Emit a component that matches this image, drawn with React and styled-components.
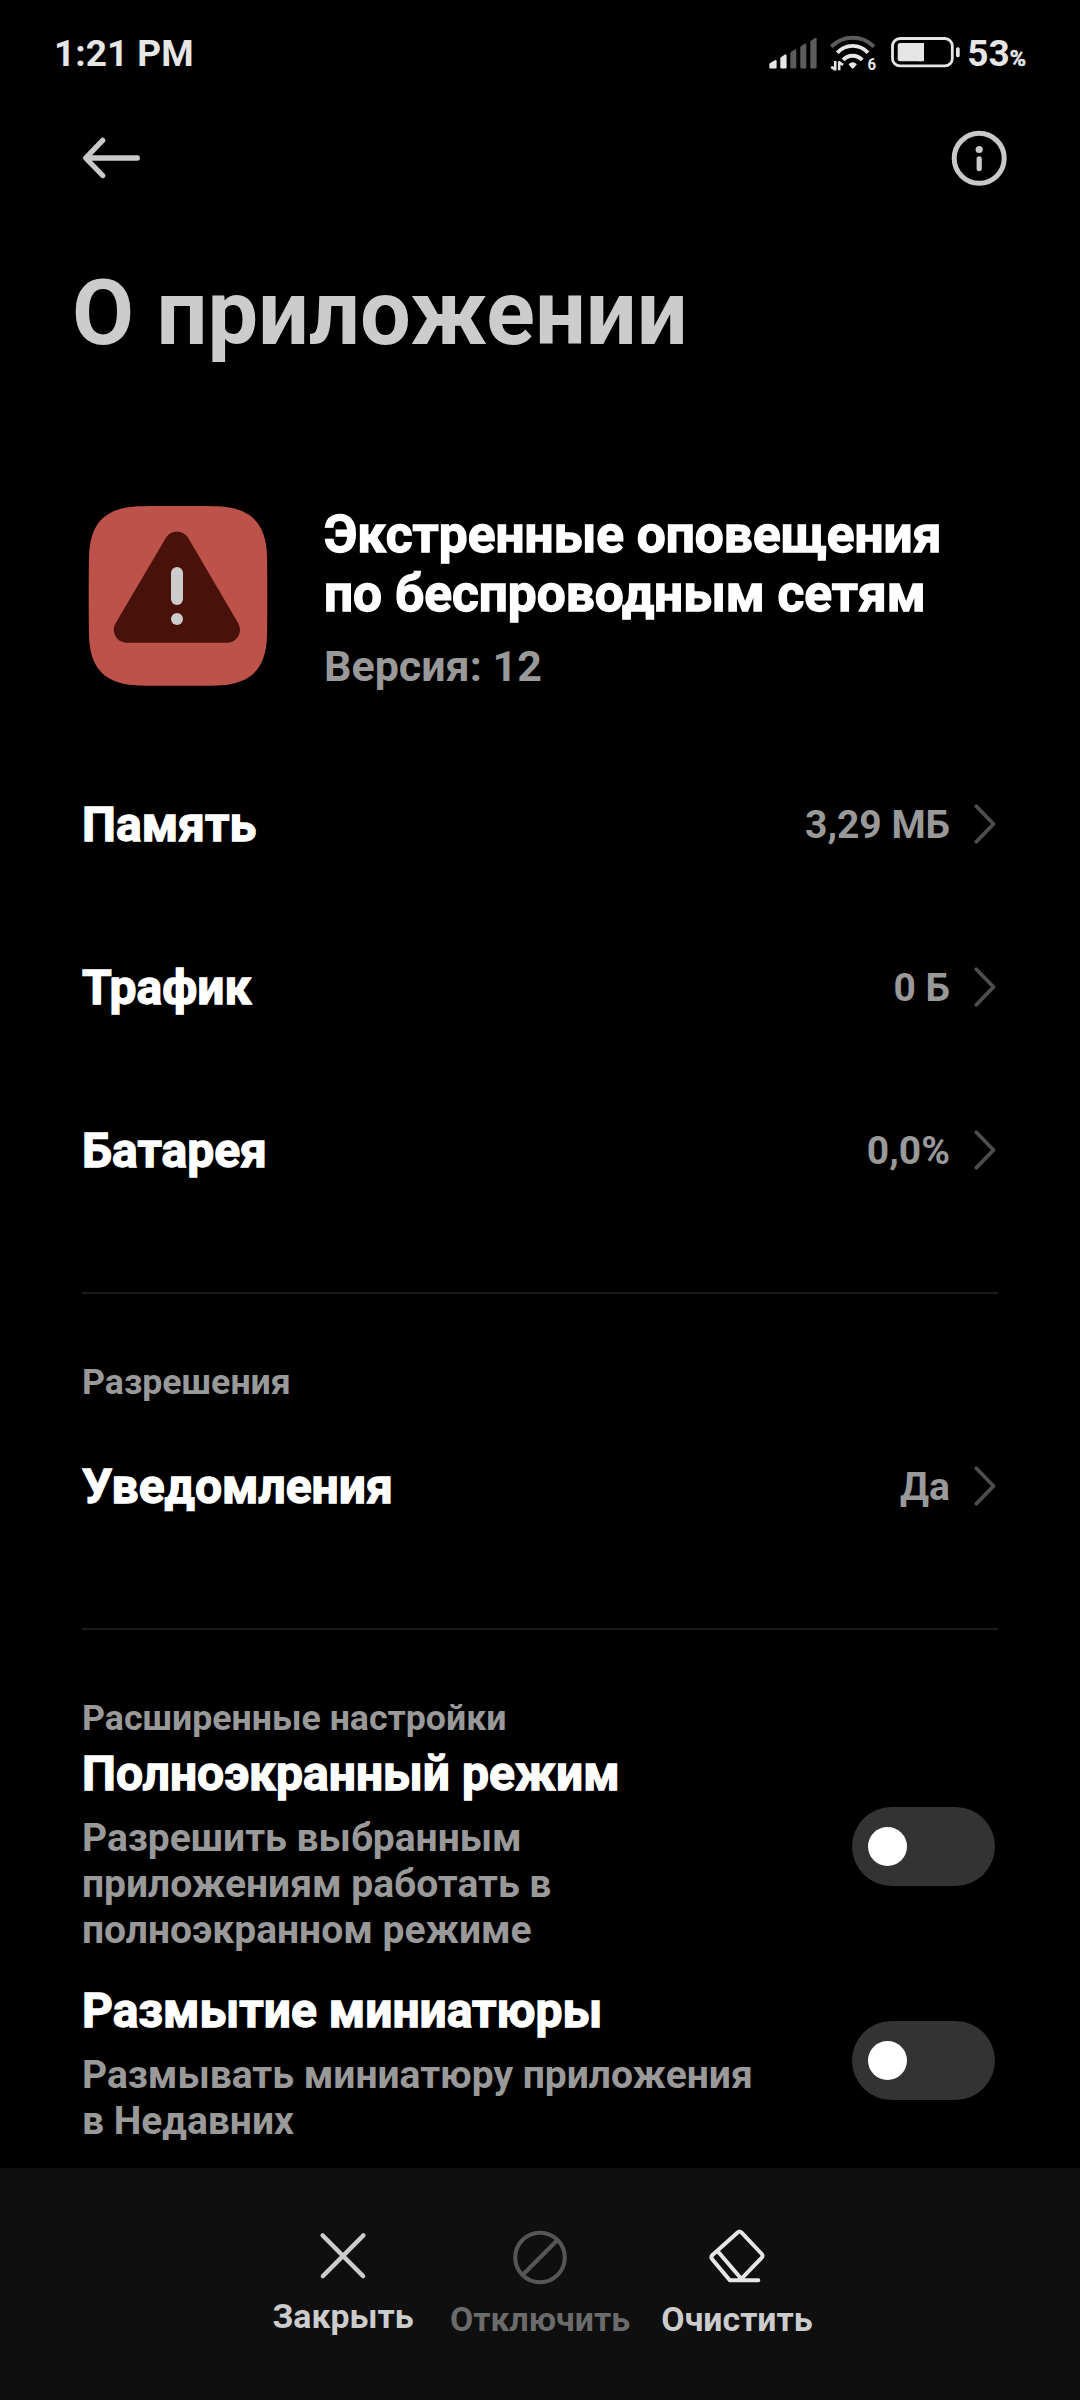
import React, { useState } from 'react';
import styled, { createGlobalStyle } from 'styled-components';

const GlobalStyle = createGlobalStyle`
  * {
    box-sizing: border-box;
  }

  body {
    margin: 0;
    background: #000;
    font-family: Roboto, 'Noto Sans', sans-serif;
    font-weight: 700;
  }
`;

const Screen = styled.div`
  display: flex;
  flex-direction: column;
  width: 1080px;
  height: 2400px;
  overflow: hidden;
  background: #000;
`;

const StatusBar = styled.div`
  display: flex;
  align-items: center;
  flex: none;
  height: 106px;
  padding: 1px 54px 0;
  font-size: 37px;
  line-height: 44px;
  color: #e6e6e6;
`;

const StatusIcons = styled.div`
  display: flex;
  align-items: center;
  margin-left: auto;

  svg {
    display: block;
    margin-bottom: 2px;
    overflow: visible;
  }
`;

const SignalIcon = styled.svg`
  margin-right: 12px;
`;

const WifiIcon = styled.svg`
  margin-right: 14px;

  text {
    font-size: 17px;
  }
`;

const BatteryIcon = styled.svg`
  margin-right: 7px;
`;

const BatteryLevel = styled.div`
  display: flex;
  align-items: baseline;
`;

const Percent = styled.span`
  font-size: 22px;
  line-height: 22px;
  -webkit-text-stroke: 0.5px #e6e6e6;
`;

const AppBar = styled.header`
  display: flex;
  align-items: center;
  justify-content: space-between;
  flex: none;
  height: 104px;
  padding: 0 72px 0 81px;
`;

const IconButton = styled.button`
  display: block;
  padding: 0;
  border: 0;
  background: none;
  color: #c9c9c9;

  svg {
    display: block;
  }
`;

const PageTitle = styled.h1`
  flex: none;
  margin: 51px 72px 0;
  font-size: 90px;
  line-height: 106px;
  color: #ccc;
`;

const Content = styled.main`
  flex: 1;
  min-height: 0;
  overflow: hidden;
`;

const AppInfo = styled.section`
  display: flex;
  align-items: flex-start;
  height: 238px;
  margin-top: 139px;
  padding-left: 88px;
`;

const AppIcon = styled.svg`
  display: block;
  flex: none;
  margin-right: 56px;
`;

const AppName = styled.h2`
  margin: -1px 0 18px;
  font-size: 51.4px;
  line-height: 59px;
  color: #fff;
  -webkit-text-stroke: 1.3px #fff;
`;

const Version = styled.div`
  font-size: 43px;
  line-height: 50px;
  color: #999;
`;

const Row = styled.div`
  display: flex;
  align-items: center;
  height: 163px;
  padding: 0 84px 1px 82px;
`;

const ItemTitle = styled.div`
  font-size: 48px;
  line-height: 56px;
  color: #fff;
  -webkit-text-stroke: 1.3px #fff;
`;

const Value = styled.div`
  margin: 0 24px 0 auto;
  font-size: 39px;
  line-height: 46px;
  color: #999;
`;

const Chevron = styled.svg`
  display: block;
  margin-bottom: 3px;
`;

const Divider = styled.hr`
  height: 2px;
  margin: 59px 82px 67px;
  border: 0;
  background: #1a1a1a;
`;

const SectionLabel = styled.div`
  margin: 0 82px ${(props) => props.$gap}px;
  font-size: 35.7px;
  line-height: 42px;
  color: #999;
`;

const ToggleRow = styled.div`
  display: flex;
  align-items: center;
  justify-content: space-between;
  margin-bottom: 30px;
  padding: 0 85px 0 82px;
`;

const Description = styled.div`
  max-width: 690px;
  margin-top: 13px;
  font-size: 39px;
  line-height: 46px;
  color: #999;
  white-space: pre-line;
`;

const Switch = styled.button`
  display: flex;
  align-items: center;
  justify-content: ${(props) => (props.$on ? 'flex-end' : 'flex-start')};
  flex: none;
  width: 143px;
  height: 79px;
  margin-bottom: 6px;
  padding: 0 16px;
  border: 0;
  border-radius: 40px;
  background: ${(props) => (props.$on ? '#277af7' : '#333')};
`;

const Knob = styled.span`
  width: 39px;
  height: 39px;
  border-radius: 50%;
  background: #fff;
`;

const BottomBar = styled.footer`
  display: flex;
  justify-content: center;
  flex: none;
  height: 232px;
  padding-top: 61px;
  background: #0f0f0f;
`;

const Action = styled.button`
  display: flex;
  flex-direction: column;
  align-items: center;
  width: 197px;
  padding: 0;
  border: 0;
  background: none;
  font: inherit;
  font-size: 33.8px;
  line-height: 40px;
  color: ${(props) => (props.disabled ? '#6b6b6b' : '#ccc')};

  svg {
    display: block;
    margin-bottom: ${(props) => props.$gap}px;
  }
`;

const stats = [
  { title: 'Память', value: '3,29 МБ' },
  { title: 'Трафик', value: '0 Б' },
  { title: 'Батарея', value: '0,0%' },
];

const toggles = [
  {
    title: 'Полноэкранный режим',
    description: 'Разрешить выбранным\nприложениям работать в\nполноэкранном режиме',
  },
  {
    title: 'Размытие миниатюры',
    description: 'Размывать миниатюру приложения\nв Недавних',
  },
];

function LinkRow({ title, value }) {
  return (
    <Row>
      <ItemTitle>{title}</ItemTitle>
      <Value>{value}</Value>
      <Chevron width="22" height="40" viewBox="0 0 22 40" fill="none">
        <path
          d="M2.3 2.3L19.5 20L2.3 37.7"
          stroke="#4d4d4d"
          strokeWidth="3.8"
          strokeLinecap="round"
          strokeLinejoin="round"
        />
      </Chevron>
    </Row>
  );
}

function SwitchRow({ title, description }) {
  const [on, setOn] = useState(false);

  return (
    <ToggleRow>
      <div>
        <ItemTitle>{title}</ItemTitle>
        <Description>{description}</Description>
      </div>
      <Switch $on={on} onClick={() => setOn(!on)}>
        <Knob />
      </Switch>
    </ToggleRow>
  );
}

function App() {
  return (
    <>
      <GlobalStyle />
      <Screen>
        <StatusBar>
          <span>1:21 PM</span>
          <StatusIcons>
            <SignalIcon width="48" height="34" viewBox="0 0 48 34">
              <g fill="#e6e6e6">
                <path d="M.3 28.5Q.3 27.6 1.2 27L5.9 24.3Q7.6 23.6 7.6 25.3V31.5Q7.6 32.5 6.6 32.5H1.3Q.3 32.5 .3 31.5Z" />
                <path d="M11.3 22.4Q11.3 21.4 12.2 20.9L16 18.6Q17.6 17.9 17.6 19.5V31.5Q17.6 32.5 16.6 32.5H12.3Q11.3 32.5 11.3 31.5Z" />
              </g>
              <g fill="#5c5c5c">
                <path d="M21.3 17.2Q21.3 16.2 22.2 15.7L25.7 13.5Q27.3 12.7 27.3 14.4V31.5Q27.3 32.5 26.3 32.5H22.3Q21.3 32.5 21.3 31.5Z" />
                <path d="M31.3 11.5Q31.3 10.5 32.2 10L35.7 7.8Q37.3 7 37.3 8.7V31.5Q37.3 32.5 36.3 32.5H32.3Q31.3 32.5 31.3 31.5Z" />
                <path d="M41.3 6Q41.3 5 42.2 4.4L46 2.1Q47.6 1.3 47.6 3V31.5Q47.6 32.5 46.6 32.5H42.3Q41.3 32.5 41.3 31.5Z" />
              </g>
            </SignalIcon>
            <WifiIcon width="48" height="38" viewBox="0 0 48 38" fill="none">
              <path d="M2.3 12.7A29.8 29.8 0 0 1 45 12.7" stroke="#5c5c5c" strokeWidth="3.9" />
              <g stroke="#e6e6e6" strokeWidth="3.9">
                <path d="M8.3 18.8A20.5 20.5 0 0 1 39 18.8" />
                <path d="M14.1 26A12.8 12.8 0 0 1 33.2 26" />
              </g>
              <path
                d="M19.5 30.2Q23.7 26.2 27.9 30.2L24.6 34.2Q23.7 35 22.8 34.2Z"
                fill="#e6e6e6"
              />
              <path
                d="M6.2 27V35.4L2.2 32.8M10.2 36.3V28.2L14 31"
                stroke="#e6e6e6"
                strokeWidth="2.6"
                strokeLinejoin="round"
              />
              <text x="38.6" y="36.2" textLength="8.6" lengthAdjust="spacingAndGlyphs" fill="#e6e6e6">
                6
              </text>
            </WifiIcon>
            <BatteryIcon width="69" height="32" viewBox="0 0 69 32">
              <rect
                x="1.5"
                y="1.5"
                width="59.8"
                height="27.4"
                rx="7.5"
                fill="none"
                stroke="#e6e6e6"
                strokeWidth="2.8"
              />
              <rect x="6.7" y="6" width="26.3" height="18.2" rx="2.5" fill="#e6e6e6" />
              <path d="M33 6V24.2H28V6Z" fill="#e6e6e6" />
              <rect x="65" y="10.2" width="3.7" height="10" rx="1.6" fill="#e6e6e6" />
            </BatteryIcon>
            <BatteryLevel>
              <span>53</span>
              <Percent>%</Percent>
            </BatteryLevel>
          </StatusIcons>
        </StatusBar>

        <AppBar>
          <IconButton aria-label="Назад">
            <svg width="60" height="44" viewBox="0 0 60 44" fill="none">
              <path
                d="M56.3 22H5M21.7 4.3L4.6 22L21.7 39.5"
                stroke="currentColor"
                strokeWidth="5.3"
                strokeLinecap="round"
                strokeLinejoin="round"
              />
            </svg>
          </IconButton>
          <IconButton aria-label="Информация">
            <svg width="57" height="57" viewBox="0 0 57 57" fill="none">
              <circle cx="28.2" cy="28.3" r="25" stroke="currentColor" strokeWidth="5" />
              <circle cx="28.2" cy="19.5" r="3.6" fill="currentColor" />
              <path d="M28.2 28.8V38.6" stroke="currentColor" strokeWidth="5.2" strokeLinecap="round" />
            </svg>
          </IconButton>
        </AppBar>

        <PageTitle>О приложении</PageTitle>

        <Content>
          <AppInfo>
            <AppIcon width="180" height="180" viewBox="0 0 180 180">
              <path
                d="M50 .3C62 0 118 0 130 .3C163 2 178 17 179 50C179.4 66 179.4 114 179 130C178 163 163 178 130 179.4C118 179.8 62 179.8 50 179.4C17 178 2 163 1 130C.6 114 .6 66 1 50C2 17 17 2 50 .3Z"
                fill="#bd524a"
              />
              <path
                d="M89 38.5L38.8 123.8H139Z"
                fill="#481109"
                stroke="#481109"
                strokeWidth="26"
                strokeLinejoin="round"
              />
              <path d="M89 67V93" stroke="#ccc" strokeWidth="12" strokeLinecap="round" />
              <circle cx="89" cy="113" r="6" fill="#ccc" />
            </AppIcon>
            <div>
              <AppName>
                Экстренные оповещения
                <br />
                по беспроводным сетям
              </AppName>
              <Version>Версия: 12</Version>
            </div>
          </AppInfo>

          {stats.map((item) => (
            <LinkRow key={item.title} title={item.title} value={item.value} />
          ))}

          <Divider />
          <SectionLabel $gap={3}>Разрешения</SectionLabel>
          <LinkRow title="Уведомления" value="Да" />

          <Divider />
          <SectionLabel $gap={7}>Расширенные настройки</SectionLabel>
          {toggles.map((item) => (
            <SwitchRow key={item.title} title={item.title} description={item.description} />
          ))}
        </Content>

        <BottomBar>
          <Action $gap={12}>
            <svg width="56" height="56" viewBox="0 0 56 56" fill="none">
              <path
                d="M7.7 6.5L48 47M48.3 6.5L8 47"
                stroke="#ccc"
                strokeWidth="4.6"
                strokeLinecap="round"
              />
            </svg>
            Закрыть
          </Action>
          <Action $gap={15} disabled>
            <svg width="56" height="56" viewBox="0 0 56 56" fill="none">
              <circle cx="28" cy="28.5" r="24.8" stroke="#565656" strokeWidth="4" />
              <path d="M45.5 11L10.5 46" stroke="#565656" strokeWidth="4" />
            </svg>
            Отключить
          </Action>
          <Action $gap={15}>
            <svg width="56" height="56" viewBox="0 0 56 56" fill="none">
              <path
                d="M28.6 3.4Q30.5 1.6 32.4 3.4L52.8 25Q54.2 26.8 52.8 28.6L32.3 49.8L8.7 22.2M28.6 3.4L3.2 26.3Q1.6 28.2 3.2 30.2L20.8 51.3H49.3M32.3 49.8V51.3"
                stroke="#e6e6e6"
                strokeWidth="4"
                strokeLinecap="round"
                strokeLinejoin="round"
              />
            </svg>
            Очистить
          </Action>
        </BottomBar>
      </Screen>
    </>
  );
}

export default App;
